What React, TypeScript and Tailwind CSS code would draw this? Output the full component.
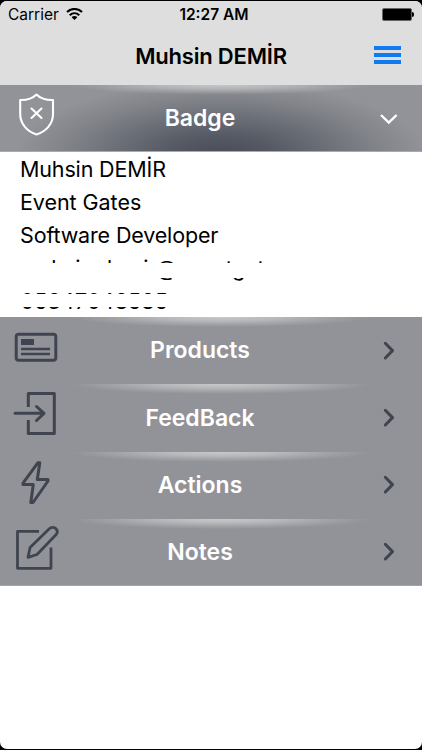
import React from "react";

const ink = "#3f4450";

function Glow() {
  return (
    <svg className="absolute inset-0 h-full w-full" viewBox="0 0 422 67" preserveAspectRatio="none">
      <defs>
        <radialGradient id="glow" cx="0.5" cy="0.5" r="0.5">
          <stop offset="0" stopColor="#fff" stopOpacity="0.5" />
          <stop offset="0.4" stopColor="#fff" stopOpacity="0.34" />
          <stop offset="0.75" stopColor="#fff" stopOpacity="0.13" />
          <stop offset="1" stopColor="#fff" stopOpacity="0" />
        </radialGradient>
      </defs>
      <ellipse cx="221" cy="0" rx="150" ry="10" fill="url(#glow)" />
    </svg>
  );
}

function Chevron() {
  return (
    <svg width="12" height="20" viewBox="0 0 12 20" fill="none" stroke={ink} strokeWidth="3" strokeLinecap="round" strokeLinejoin="round">
      <path d="M2.3 2.3 9.5 9.6 2.3 17" />
    </svg>
  );
}

function CardIcon() {
  return (
    <svg width="60" height="67" viewBox="0 0 60 67" fill="none" stroke={ink}>
      <rect x="16.2" y="17.2" width="39.6" height="26" rx="2.5" strokeWidth="3" />
      <path d="M21 22h13v6H21z" fill={ink} stroke="none" />
      <path d="M21 32h29M21 37h29" strokeWidth="2.4" />
    </svg>
  );
}

function EnterIcon() {
  return (
    <svg width="60" height="67" viewBox="0 0 60 67" fill="none" stroke={ink} strokeWidth="3" strokeLinecap="round" strokeLinejoin="round">
      <path d="M28.3 23V9.5h26v40h-26V36" strokeLinecap="butt" />
      <path d="M15 29.3h29M36.5 22.5l7.5 6.800-7.500 7.200" />
    </svg>
  );
}

function BoltIcon() {
  return (
    <svg width="60" height="67" viewBox="0 0 60 67" fill="none" stroke={ink} strokeWidth="3" strokeLinejoin="round">
      <path d="M37.8 10.8 23 31.2v1.2h10.300L30.800 50.500h2.200L48 29v-1.500H37.300L39.800 10.800z" />
    </svg>
  );
}

function EditIcon() {
  return (
    <svg width="60" height="67" viewBox="0 0 60 67" fill="none" stroke={ink} strokeWidth="2.8" strokeLinejoin="round">
      <path d="M39 12.300H17.500v37h33.500V28.500" />
      <path d="M28 38.300l2.100-9.800L49.300 9.800c2.200-2.200 5.100-1.700 6.700 0s1.600 4.200-.3 6.200L37 35.500z" />
    </svg>
  );
}

const rows = [
  { label: "Products", icon: <CardIcon /> },
  { label: "FeedBack", icon: <EnterIcon /> },
  { label: "Actions", icon: <BoltIcon /> },
  { label: "Notes", icon: <EditIcon /> },
];

export default function App() {
  return (
    <div className="h-[750px] w-[422px] overflow-hidden bg-black py-px font-['Inter',sans-serif] text-black">
      <div className="flex h-[748px] flex-col overflow-hidden rounded-[7px] bg-white">
        <header className="h-[84px] shrink-0 bg-[#dedede]">
          <div className="grid h-[28px] grid-cols-3 items-center pl-2 pr-[8px] text-[15.5px]">
            <div className="flex items-center gap-[7px]">
              <span>Carrier</span>
              <svg className="-mt-[2px]" width="17" height="12" viewBox="0 0 17 12" fill="none" stroke="#000" strokeWidth="2.1">
                <path d="M1 4.100C5.300-.1 11.700-.1 16 4.100M3.700 7.200c2.800-2.700 6.800-2.700 9.600 0" />
                <path d="M5.600 9.200c1.600-1.600 4.200-1.600 5.800 0L8.500 12z" fill="#000" stroke="none" />
              </svg>
            </div>
            <span className="whitespace-nowrap pl-[6px] text-center text-[15.5px] font-semibold">12:27 AM</span>
            <div className="-mt-px flex items-center justify-end">
              <div className="h-[13px] w-[30px] rounded-[2px] border border-[#666] bg-black" />
              <div className="h-[5px] w-[2px] rounded-r bg-black" />
            </div>
          </div>
          <div className="grid h-[54px] grid-cols-[1fr_auto_1fr] items-center">
            <span />
            <h1 className="text-[22px] font-semibold tracking-[-0.2px]">Muhsin DEMİR</h1>
            <div className="-mt-[2px] mr-[21px] flex flex-col gap-[3px] justify-self-end">
              <i className="h-[4px] w-[27px] bg-[#0f7af2]" />
              <i className="h-[4px] w-[27px] bg-[#0f7af2]" />
              <i className="h-[4px] w-[27px] bg-[#0f7af2]" />
            </div>
          </div>
        </header>

        <section className="relative h-[67px] shrink-0 border-b border-[#aaa9ae] bg-[#929398]">
          <div className="absolute inset-0 bg-[radial-gradient(ellipse_205px_74px_at_221px_70px,#4a4d58_0%,#555963_25%,#6b6f77_52%,#818389_76%,#92939800_100%)]" />
          <Glow />
          <div className="relative flex h-full items-center">
            <svg width="60" height="67" viewBox="0 0 60 67" fill="none" stroke="#fff" strokeWidth="2.1" strokeLinejoin="round" strokeLinecap="round">
              <path d="M36.500 9.500C33 13 26.500 15.200 20.200 15v14c0 10 7 17.500 16.300 20.500C46 46.500 53 39 53 29V15c-6.300.2-13-2-16.500-5.500z" />
              <path d="M31.500 23.500l10 9.500m0-9.500-10 9.500" />
            </svg>
            <span className="w-[280px] pt-px text-center text-[23px] font-semibold text-white">Badge</span>
            <svg className="ml-[40px] mt-[2px]" width="18" height="12" viewBox="0 0 18 12" fill="none" stroke="#fff" strokeWidth="2.4">
              <path d="M1 2 8.800 9.500l7.800-7.500" />
            </svg>
          </div>
        </section>

        <div className="relative h-[165px] shrink-0 whitespace-nowrap pl-[20px] pt-px text-[21.5px] leading-[33px] tracking-[-0.15px]">
          <p>Muhsin DEMİR</p>
          <p className="tracking-[-0.05px]">Event Gates</p>
          <p>Software Developer</p>
          <p className="tracking-[-0.1px]">muhsin.demir@eventgates</p>
          <p className="pl-[0.5px] tracking-[0.15px]">05347048585</p>
          <div className="absolute left-0 top-[111px] h-[15px] w-full bg-white" />
          <div className="absolute left-0 top-[142px] h-[13px] w-full bg-white" />
        </div>

        <nav className="h-[269px] shrink-0 border-b border-[#a5a5aa] bg-[#929398]">
          {rows.map((r) => (
            <div key={r.label} className="relative h-[67.25px]">
              <Glow />
              <div className="relative flex h-full items-center">
                {r.icon}
                <span className="w-[280px] text-center text-[23px] font-semibold text-white">{r.label}</span>
                <div className="ml-[43px]">
                  <Chevron />
                </div>
              </div>
            </div>
          ))}
        </nav>
      </div>
    </div>
  );
}
